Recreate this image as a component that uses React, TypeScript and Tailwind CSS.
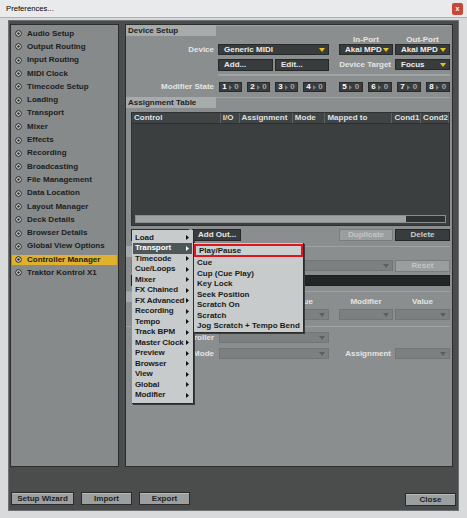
import React from 'react';

const sidebarItems = [
  'Audio Setup',
  'Output Routing',
  'Input Routing',
  'MIDI Clock',
  'Timecode Setup',
  'Loading',
  'Transport',
  'Mixer',
  'Effects',
  'Recording',
  'Broadcasting',
  'File Management',
  'Data Location',
  'Layout Manager',
  'Deck Details',
  'Browser Details',
  'Global View Options',
  'Controller Manager',
  'Traktor Kontrol X1',
];

const addMenu = [
  'Load',
  'Transport',
  'Timecode',
  'Cue/Loops',
  'Mixer',
  'FX Chained',
  'FX Advanced',
  'Recording',
  'Tempo',
  'Track BPM',
  'Master Clock',
  'Preview',
  'Browser',
  'View',
  'Global',
  'Modifier',
];

const transportMenu = [
  'Play/Pause',
  'Cue',
  'Cup (Cue Play)',
  'Key Lock',
  'Seek Position',
  'Scratch On',
  'Scratch',
  'Jog Scratch + Tempo Bend',
];

const columns = [
  { name: 'Control', w: 'w-[90px]' },
  { name: 'I/O', w: 'w-[19px]' },
  { name: 'Assignment', w: 'w-[54px]' },
  { name: 'Mode', w: 'w-[33px]' },
  { name: 'Mapped to', w: 'w-[68px]' },
  { name: 'Cond1', w: 'w-[29px]' },
  { name: 'Cond2', w: 'flex-1' },
];

const Bullet = () => (
  <svg width="7" height="7" viewBox="0 0 7 7" className="shrink-0">
    <circle cx="3.5" cy="3.5" r="2.8" fill="#e6e8e8" stroke="#1d1f1f" strokeWidth="1" />
    <circle cx="3.5" cy="3.5" r="1.2" fill="#1d1f1f" />
  </svg>
);

const Arrow = ({ color }: { color: string }) => (
  <svg width="6" height="4" viewBox="0 0 6 4" className="shrink-0">
    <polygon points="0,0 6,0 3,4" fill={color} />
  </svg>
);

const SubArrow = ({ color = '#111' }: { color?: string }) => (
  <svg width="3" height="5" viewBox="0 0 3 5" className="shrink-0">
    <polygon points="0,0 3,2.5 0,5" fill={color} />
  </svg>
);

// dropdown: dark = active, grey = disabled
const Dropdown = ({ label, className, disabled }: { label?: string; className: string; disabled?: boolean }) => (
  <div
    className={`flex h-[11px] items-center justify-between border pl-[5px] pr-[3px] ${
      disabled ? 'border-[#727575] bg-[#7d8080]' : 'border-[#282a2a] bg-[#393c3c]'
    } ${className}`}
  >
    <span className="text-[#ededed]">{label}</span>
    <Arrow color={disabled ? '#5c5f5f' : '#e8c11c'} />
  </div>
);

const DarkButton = ({ label, className }: { label?: string; className: string }) => (
  <div className={`flex h-[12px] items-center border border-[#262828] bg-[#393c3c] pl-[5px] text-[#e8e8e8] ${className}`}>
    {label}
  </div>
);

const GreyButton = ({ label, className }: { label?: string; className: string }) => (
  <div className={`flex h-[12px] items-center justify-center border border-[#7a7d7d] bg-[#9b9e9e] text-[#c2c5c5] ${className}`}>
    {label}
  </div>
);

const ModButton = ({ n, w }: { n: number; w: string }) => (
  <div className={`flex h-[10px] items-center border border-[#292b2b] bg-[#3a3d3d] ${w}`}>
    <span className="w-[9px] text-center text-white">{n}</span>
    <SubArrow color="#7d8080" />
    <span className="flex-1 text-center text-[#a2a5a5]">0</span>
  </div>
);

const SectionHeader = ({ title }: { title?: string }) => (
  <div className="flex h-[11px] shrink-0">
    <div className="flex w-[90px] items-center bg-[#a8abab] pl-[2px] text-[#1d1f1f]">{title}</div>
    <div className="flex-1 border-t border-[#9fa2a2]" />
  </div>
);

const BottomButton = ({ label, className }: { label: string; className: string }) => (
  <div
    className={`flex h-[13px] items-center justify-center border border-[#2a2c2c] bg-[#9c9f9f] text-[#1c1e1e] shadow-[inset_0_1px_0_#b8bbbb] ${className}`}
  >
    {label}
  </div>
);

export default function App() {
  return (
    <div className="relative flex h-[518px] w-[467px] flex-col overflow-hidden bg-[#d8dadc] font-['Liberation_Sans',Arial,sans-serif] text-[8px] font-bold leading-none">
      {/* title bar */}
      <div className="flex h-[17px] shrink-0 items-center justify-between bg-[#e9eaeb] pl-[6px] pr-[4px]">
        <span className="text-[7.7px] font-normal text-black">Preferences...</span>
        <div className="flex h-[12px] w-[11px] items-center justify-center rounded-[2px] bg-[#c9463b] text-[7px] text-white">
          x
        </div>
      </div>

      {/* frame */}
      <div className="flex flex-1 flex-col border-t border-[#aeb1b4] pb-[7px] pl-[8px] pr-[8px] pt-[2px]">
        <div className="flex flex-1 flex-col border border-[#6f7274] bg-[#4b4d4d]">
          <div className="flex gap-[6px] pl-[1px] pt-[3px]">
            {/* left nav */}
            <div className="flex h-[443px] w-[109px] flex-col border border-[#2c2e2e] bg-[#878a8a] pt-[2px]">
              {sidebarItems.map((item) => (
                <div key={item} className="flex h-[13.3px] items-center">
                  <div
                    className={`mx-[1px] flex h-[10px] flex-1 items-center gap-[5px] pl-[3px] ${
                      item === 'Controller Manager' ? 'bg-[#e0b12e]' : ''
                    }`}
                  >
                    <Bullet />
                    <span className="text-[#1b1d1d]">{item}</span>
                  </div>
                </div>
              ))}
            </div>

            {/* right panel */}
            <div className="flex h-[443px] w-[328px] flex-col border border-[#2c2e2e] bg-[#8b8e8e] pr-[2px] text-[#e3e5e5]">
              <SectionHeader title="Device Setup" />
              <div className="flex h-[8px] items-center">
                <div className="w-[213px]" />
                <div className="w-[54px] text-center">In-Port</div>
                <div className="w-[2px]" />
                <div className="w-[55px] text-center">Out-Port</div>
              </div>
              <div className="flex h-[11px] items-center">
                <div className="w-[88px] text-right">Device</div>
                <div className="w-[4px]" />
                <Dropdown label="Generic MIDI" className="w-[111px]" />
                <div className="w-[10px]" />
                <Dropdown label="Akai MPD" className="w-[54px]" />
                <div className="w-[2px]" />
                <Dropdown label="Akai MPD" className="w-[55px]" />
              </div>
              <div className="mt-[4px] flex h-[11px] items-center">
                <div className="w-[92px]" />
                <DarkButton label="Add..." className="h-[11px] w-[55px]" />
                <div className="w-[2px]" />
                <DarkButton label="Edit..." className="h-[11px] w-[54px]" />
                <div className="w-[62px] text-right">Device Target</div>
                <div className="w-[4px]" />
                <Dropdown label="Focus" className="w-[55px]" />
              </div>
              <div className="ml-[92px] mt-[4px] h-[2px] bg-[#a0a3a3]" />
              <div className="mt-[6px] flex h-[10px] items-center">
                <div className="w-[88px] text-right">Modifier State</div>
                <div className="flex gap-[5px] pl-[5px]">
                  {[1, 2, 3, 4].map((n) => (
                    <ModButton key={n} n={n} w="w-[23px]" />
                  ))}
                </div>
                <div className="flex gap-[5px] pl-[13px]">
                  {[5, 6, 7, 8].map((n) => (
                    <ModButton key={n} n={n} w="w-[24px]" />
                  ))}
                </div>
              </div>

              <div className="mt-[5px]">
                <SectionHeader title="Assignment Table" />
              </div>
              {/* table */}
              <div className="ml-[5px] mt-[4px] flex h-[114px] flex-col border border-[#2f3232] bg-[#3b3f3f]">
                <div className="flex h-[11px] border-b border-[#2c2f2f] bg-[#404444]">
                  {columns.map((c) => (
                    <div key={c.name} className={`flex items-center border-r border-[#5d6161] pl-[2px] text-[#dfe1e1] ${c.w}`}>
                      {c.name}
                    </div>
                  ))}
                </div>
                <div className="flex-1" />
                <div className="mx-[3px] mb-[2px] flex h-[8px] border border-[#8b8e8e] bg-[#2f3232]">
                  <div className="w-[270px] bg-[#a0a3a3]" />
                </div>
              </div>
              <div className="ml-[5px] mt-[3px] flex items-center">
                {/* Add In... sits under the popup menu */}
                <DarkButton className="w-[58px]" />
                <div className="w-[3px]" />
                <DarkButton label="Add Out..." className="w-[49px]" />
                <div className="flex-1" />
                <GreyButton label="Duplicate" className="w-[54px]" />
                <div className="w-[2px]" />
                <div className="flex h-[12px] w-[55px] items-center justify-center border border-[#262828] bg-[#393c3c] text-[#c9cccc]">
                  Delete
                </div>
              </div>

              <div className="mt-[5px]">
                <SectionHeader />
              </div>
              <div className="ml-[5px] mt-[3px] flex h-[11px] items-center">
                <GreyButton className="h-[11px] w-[40px]" />
                <div className="w-[4px]" />
                <Dropdown disabled className="flex-1" />
                <div className="w-[2px]" />
                <GreyButton label="Reset" className="h-[11px] w-[55px]" />
              </div>
              <div className="ml-[5px] mt-[4px] h-[11px] border border-[#1c1e1e] bg-[#232626]" />

              <div className="mt-[5px] flex h-[16px] border-t border-[#9fa2a2]">
                <div className="h-[10px] w-[90px] bg-[#a8abab]" />
                <div className="flex flex-1 items-end pb-[1px]">
                  <div className="w-[60px]" />
                  <div className="w-[53px] text-center">Value</div>
                  <div className="w-[10px]" />
                  <div className="w-[54px] text-center">Modifier</div>
                  <div className="w-[2px]" />
                  <div className="w-[55px] text-center">Value</div>
                </div>
              </div>
              <div className="mt-[2px] flex h-[11px] items-center">
                <div className="w-[94px]" />
                <Dropdown disabled className="w-[54px]" />
                <div className="w-[2px]" />
                <Dropdown disabled className="w-[53px]" />
                <div className="w-[10px]" />
                <Dropdown disabled className="w-[54px]" />
                <div className="w-[2px]" />
                <Dropdown disabled className="w-[55px]" />
              </div>
              <div className="mt-[6px] h-[1px] bg-[#a0a3a3]" />
              <div className="mt-[5px] flex h-[11px] items-center">
                <div className="w-[88px] text-right">Type of Controller</div>
                <div className="w-[5px]" />
                <Dropdown disabled className="w-[110px]" />
              </div>
              <div className="mt-[5px] flex h-[11px] items-center">
                <div className="w-[88px] text-right">Interaction Mode</div>
                <div className="w-[5px]" />
                <Dropdown disabled className="w-[110px]" />
                <div className="w-[62px] text-right">Assignment</div>
                <div className="w-[4px]" />
                <Dropdown disabled className="w-[55px]" />
              </div>
            </div>
          </div>

          {/* bottom buttons */}
          <div className="mt-[25px] flex items-start pl-[2px] pr-[2px]">
            <BottomButton label="Setup Wizard" className="w-[63px]" />
            <div className="w-[7px]" />
            <BottomButton label="Import" className="w-[51px]" />
            <div className="w-[7px]" />
            <BottomButton label="Export" className="w-[51px]" />
            <div className="flex-1" />
            <BottomButton label="Close" className="mt-[1px] w-[51px]" />
          </div>
        </div>
      </div>

      {/* Add menu popup */}
      <div className="absolute left-[132px] top-[230px] flex h-[174px] w-[62px] flex-col border-b border-r border-[#2a2c2c] bg-[#c8cbcb] pt-[2.5px] shadow-[1px_1px_0_#3a3c3c]">
        {addMenu.map((item) => (
          <div
            key={item}
            className={`mx-[1px] flex h-[10.53px] items-center justify-between whitespace-nowrap pl-[2px] pr-[3px] ${
              item === 'Transport' ? 'bg-[#4e5757] text-white' : 'text-[#181a1a]'
            }`}
          >
            <span className="tracking-[-0.1px]">{item}</span>
            <SubArrow color={item === 'Transport' ? '#ffffff' : '#111111'} />
          </div>
        ))}
      </div>

      {/* Transport submenu */}
      <div className="absolute left-[194px] top-[243px] flex h-[90px] w-[110px] flex-col border-b border-r border-[#2a2c2c] bg-[#c8cbcb] shadow-[1px_1px_0_#3a3c3c]">
        {transportMenu.map((item, i) => (
          <div
            key={item}
            className={`flex h-[10.5px] items-center whitespace-nowrap pl-[3px] text-[#181a1a] ${
              i === 0 ? 'mb-[1px] mt-[1px] h-[13px] border-2 border-[#e0161f] bg-[#cdd0d0] pl-[2px]' : ''
            }`}
          >
            {item}
          </div>
        ))}
      </div>
    </div>
  );
}
